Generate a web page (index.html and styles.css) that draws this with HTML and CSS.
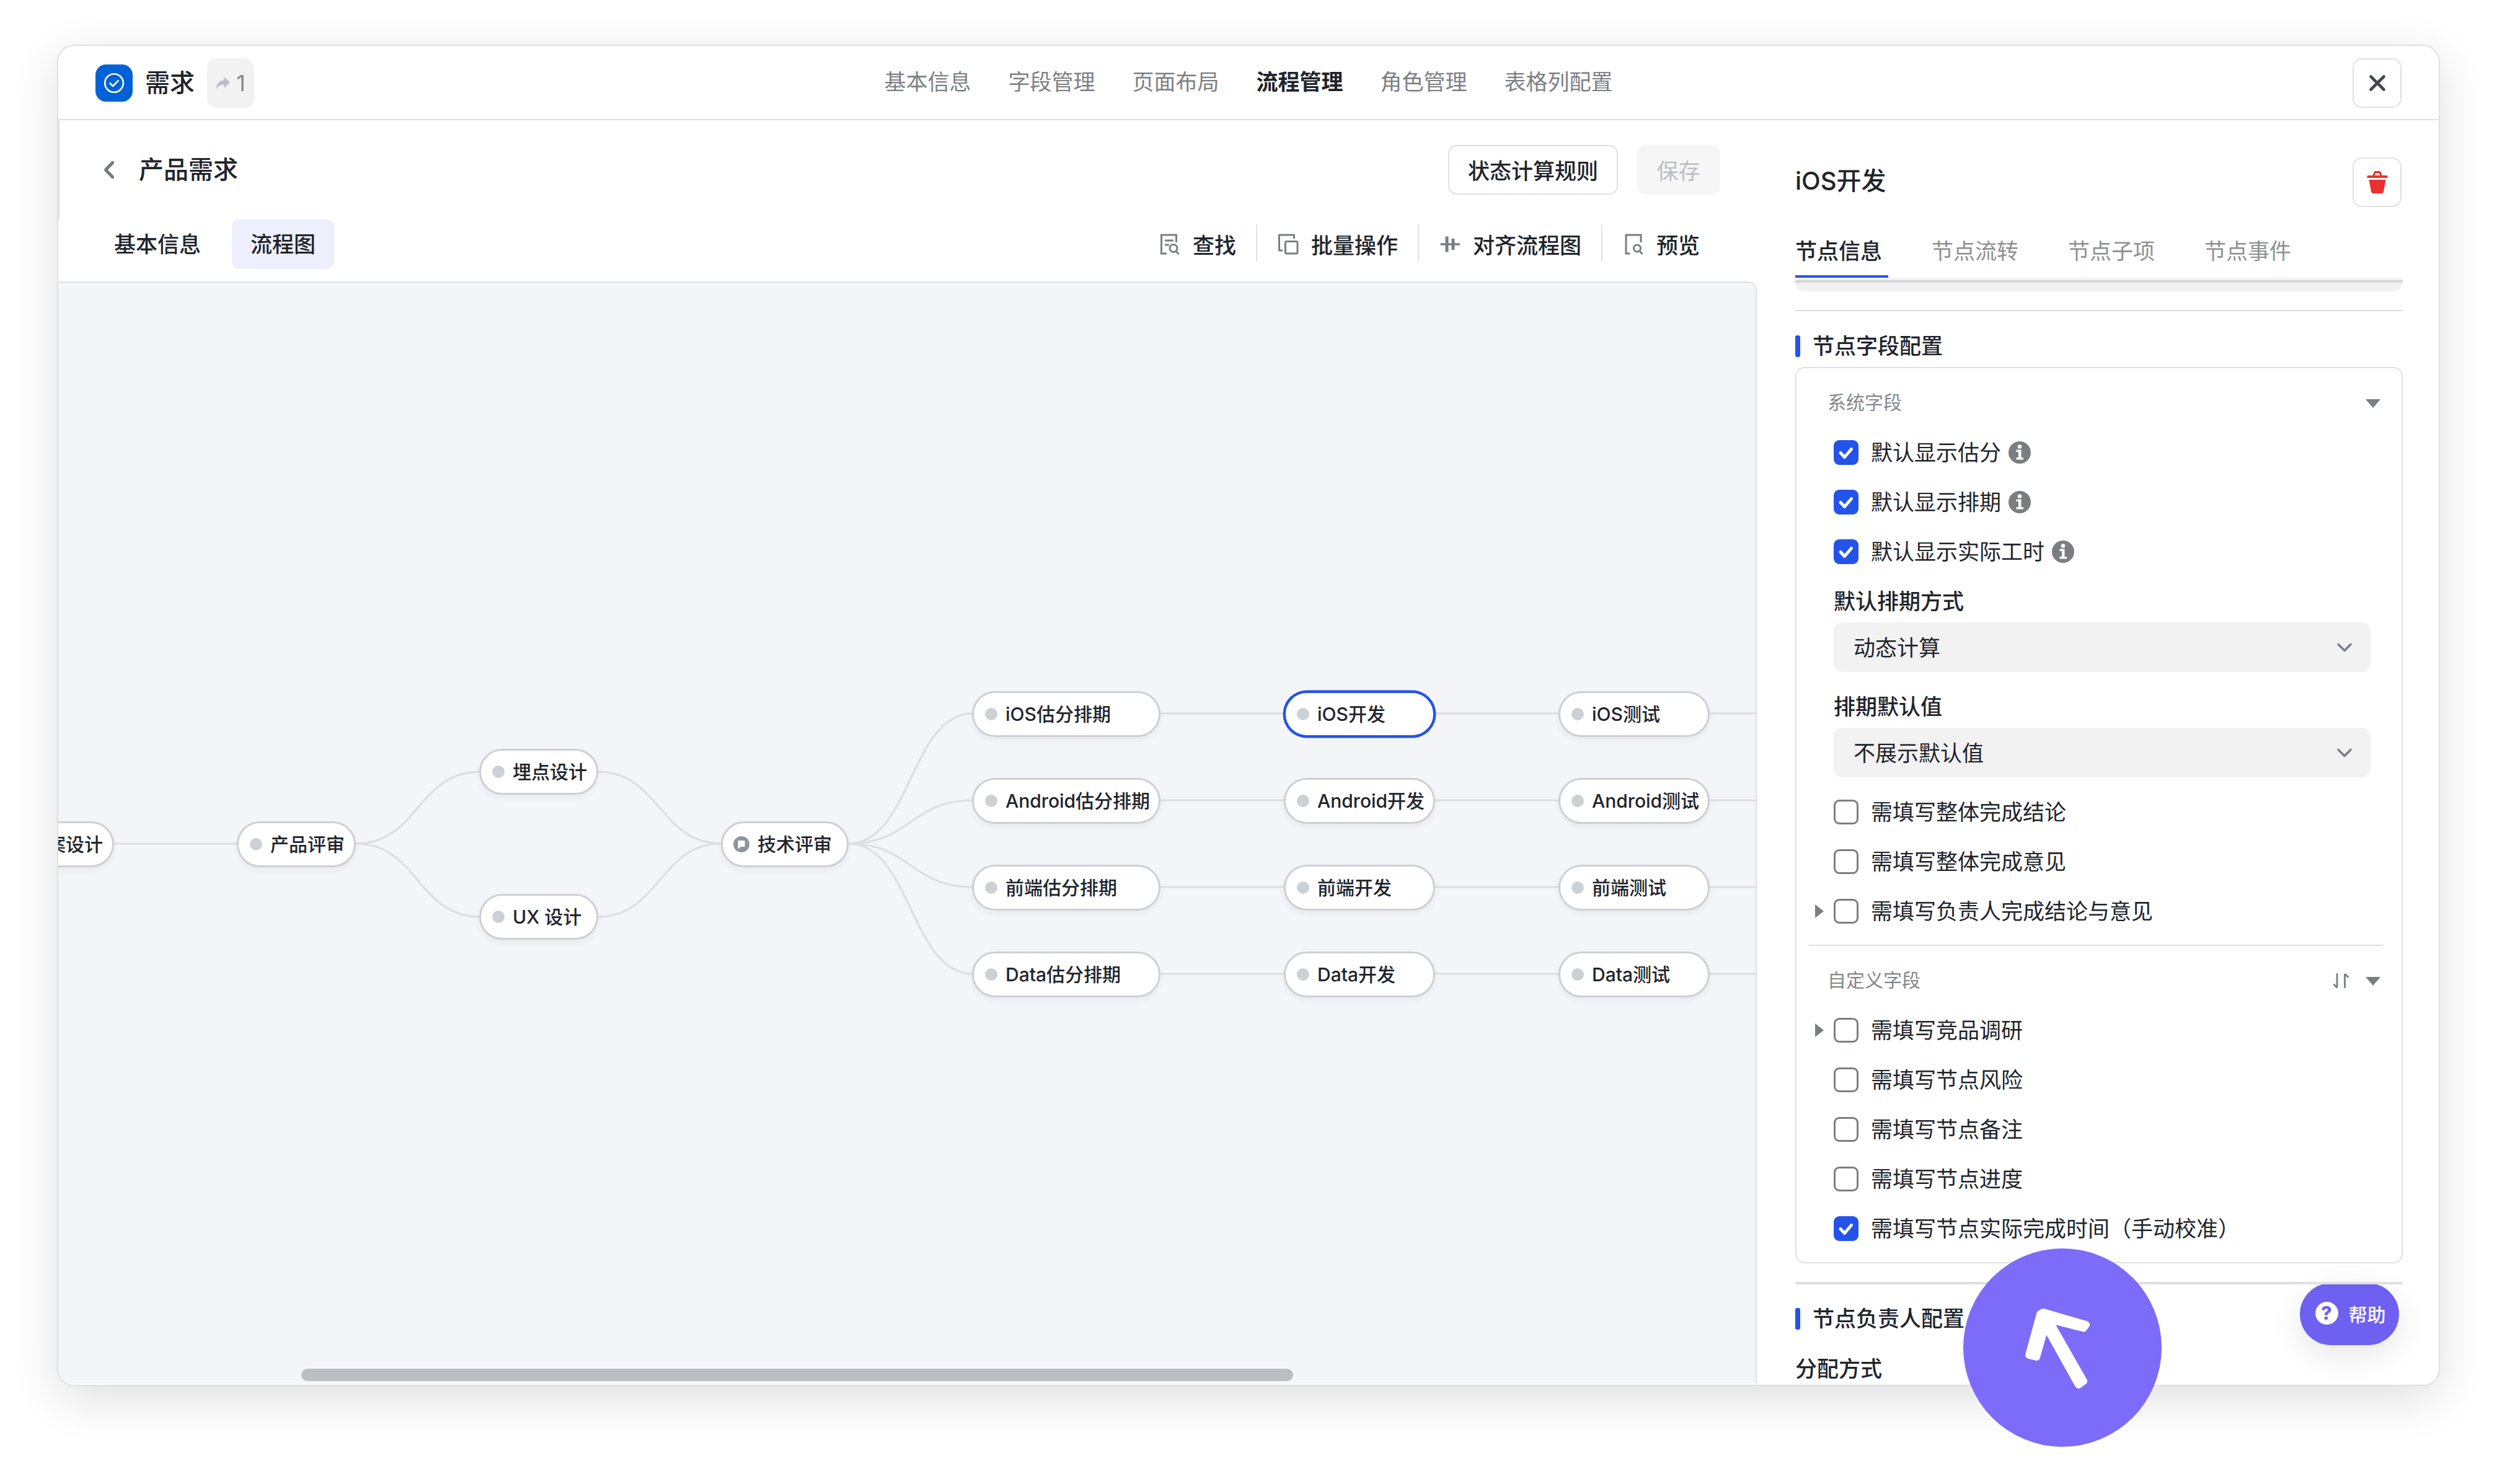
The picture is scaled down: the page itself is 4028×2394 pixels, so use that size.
FILE: index.html
```
<!DOCTYPE html>
<html lang="zh-CN">
<head>
  <meta charset="UTF-8">
  <meta name="viewport" content="width=device-width, initial-scale=1">
  <title>需求 - 流程管理</title>
  <link rel="stylesheet" href="styles.css">
</head>
<body>

  <div class="window">
    <header class="header">
      <div class="brand">
        <span class="logo">
          <svg width="36" height="36" viewBox="0 0 36 36" fill="none" stroke="#fff" stroke-width="2.6" stroke-linecap="round" stroke-linejoin="round">
            <circle cx="18" cy="18" r="14.8"/>
            <path d="M11.5 18.2l4.6 4.8 8.6-8.8"/>
          </svg>
        </span>
        <span class="brand-name">需求</span>
        <span class="badge">
          <svg width="24" height="22" viewBox="0 0 24 22" fill="#bbbfc4"><path d="M13.5 1L23 10l-9.500 9v-5.300C7.500 13.500 3.500 15.500 1 21 .8 12 5.500 6.500 13.500 6.200z"/></svg>
          1
        </span>
      </div>
      <nav class="nav">
        <a>基本信息</a>
        <a>字段管理</a>
        <a>页面布局</a>
        <a class="active">流程管理</a>
        <a>角色管理</a>
        <a>表格列配置</a>
      </nav>
      <button class="icon-btn">
        <svg width="30" height="30" viewBox="0 0 30 30" stroke="#42464e" stroke-width="4.600" stroke-linecap="round"><path d="M4.500 4.500l21 21M25.500 4.500l-21 21"/></svg>
      </button>
    </header>

    <div class="content">
      <main class="main">
        <div class="title-row">
          <svg class="back" width="20" height="32" viewBox="0 0 20 32" fill="none" stroke="#777a7e" stroke-width="5.200" stroke-linecap="round" stroke-linejoin="round"><path d="M15.500 4.500L4.500 16l11 11.500"/></svg>
          <h1>产品需求</h1>
          <button class="btn">状态计算规则</button>
          <button class="btn disabled">保存</button>
        </div>

        <div class="tool-row">
          <a class="tab">基本信息</a>
          <a class="tab active">流程图</a>
          <div class="tools">
            <span class="tool">
              <svg width="35" height="36" viewBox="0 0 35 36" fill="none" stroke="#7b7e82" stroke-width="3">
                <path d="M13 33H4.500V3h24v12M10 12h14M10 19h7"/>
                <circle cx="24" cy="24.500" r="6"/><path d="M28 29l4.500 5"/>
              </svg>
              <b>查找</b>
            </span>
            <span class="tool">
              <svg width="35" height="36" viewBox="0 0 35 36" fill="none" stroke="#7b7e82" stroke-width="3" stroke-linejoin="round">
                <path d="M9 28H3.500V3h24v6"/>
                <rect x="13.500" y="13.500" width="19.500" height="19.500" rx="2"/>
              </svg>
              <b>批量操作</b>
            </span>
            <span class="tool">
              <svg width="35" height="36" viewBox="0 0 35 36" fill="none" stroke="#7b7e82">
                <path d="M2.500 18H34" stroke-width="3.500"/>
                <path d="M13 5.500v25M23 9v18" stroke-width="5"/>
              </svg>
              <b>对齐流程图</b>
            </span>
            <span class="tool">
              <svg width="35" height="36" viewBox="0 0 35 36" fill="none" stroke="#7b7e82" stroke-width="3">
                <path d="M12.500 33H6V3h24v12"/>
                <circle cx="24" cy="24.500" r="5.500"/><path d="M28 29l4.500 5"/>
              </svg>
              <b>预览</b>
            </span>
          </div>
        </div>

        <!-- 流程画布 -->
        <div class="canvas">
          <svg class="edges" viewBox="95 456 2737 1778" fill="none" stroke="#dcdee0" stroke-width="3.200">
            <path d="M184 1361H384"/>
            <path d="M574 1361C674 1361 674 1245 774 1245M574 1361C674 1361 674 1479 774 1479"/>
            <path d="M964 1245C1064 1245 1064 1361 1164 1361M964 1479C1064 1479 1064 1361 1164 1361"/>
            <path d="M1369 1361C1469 1361 1469 1151 1569 1151M1369 1361C1469 1361 1469 1291 1569 1291M1369 1361C1469 1361 1469 1431 1569 1431M1369 1361C1469 1361 1469 1571 1569 1571"/>
            <path d="M1872 1151H2832M1872 1291H2832M1872 1431H2832M1872 1571H2832"/>
          </svg>

          <div class="node col-0 row-mid"><i class="dot"></i>方案设计</div>
          <div class="node col-1 row-mid"><i class="dot"></i>产品评审</div>
          <div class="node col-2 row-up"><i class="dot"></i>埋点设计</div>
          <div class="node col-2 row-down"><i class="dot"></i>UX 设计</div>
          <div class="node col-3 row-mid">
            <svg class="flag" width="26" height="26" viewBox="0 0 26 26"><circle cx="13" cy="13" r="13" fill="#8f959e"/><path d="M7.500 7h11v10h-8v2.500h-3z" fill="#fff"/></svg>技术评审
          </div>

          <div class="node col-4 row-1"><i class="dot"></i>iOS估分排期</div>
          <div class="node col-4 row-2"><i class="dot"></i>Android估分排期</div>
          <div class="node col-4 row-3"><i class="dot"></i>前端估分排期</div>
          <div class="node col-4 row-4"><i class="dot"></i>Data估分排期</div>

          <div class="node col-5 row-1 selected"><i class="dot"></i>iOS开发</div>
          <div class="node col-5 row-2"><i class="dot"></i>Android开发</div>
          <div class="node col-5 row-3"><i class="dot"></i>前端开发</div>
          <div class="node col-5 row-4"><i class="dot"></i>Data开发</div>

          <div class="node col-6 row-1"><i class="dot"></i>iOS测试</div>
          <div class="node col-6 row-2"><i class="dot"></i>Android测试</div>
          <div class="node col-6 row-3"><i class="dot"></i>前端测试</div>
          <div class="node col-6 row-4"><i class="dot"></i>Data测试</div>

          <div class="scrollbar"></div>
        </div>
      </main>

      <aside class="panel">
        <div class="panel-head">
          <h2>iOS开发</h2>
          <button class="icon-btn">
            <svg width="36" height="38" viewBox="0 0 36 38" fill="#eb2f2f">
              <path d="M3 8h7.500l2-5.500Q13 1 14.500 1h7q1.500 0 2 1.500L25.500 8H33q1.500 0 1.500 1.500V12h-33V9.500Q1.500 8 3 8zm11 0h8l-1-3.500h-6z" fill-rule="evenodd"/>
              <path d="M4.500 15h27l-3.500 19q-.5 3-3.500 3h-13q-3 0-3.500-3z"/>
            </svg>
          </button>
        </div>
        <div class="panel-tabs">
          <a class="active">节点信息</a>
          <a>节点流转</a>
          <a>节点子项</a>
          <a>节点事件</a>
        </div>
        <div class="strip"></div>
        <hr>
        <h3>节点字段配置</h3>

        <div class="box">
          <div class="group-head"><span>系统字段</span><i class="caret-down"></i></div>
          <div class="row"><span class="slot"></span><span class="check on"><svg viewBox="0 0 40 40"><path d="M11 20.500l6.500 7 11-13"/></svg></span>默认显示估分<span class="info"><svg viewBox="0 0 36 36"><circle cx="18" cy="8.500" r="3.300"/><path d="M12.500 13.500h8v12.500h3.500v3.500H12.500V26H16v-9h-3.500z"/></svg></span></div>
          <div class="row"><span class="slot"></span><span class="check on"><svg viewBox="0 0 40 40"><path d="M11 20.500l6.500 7 11-13"/></svg></span>默认显示排期<span class="info"><svg viewBox="0 0 36 36"><circle cx="18" cy="8.500" r="3.300"/><path d="M12.500 13.500h8v12.500h3.500v3.500H12.500V26H16v-9h-3.500z"/></svg></span></div>
          <div class="row"><span class="slot"></span><span class="check on"><svg viewBox="0 0 40 40"><path d="M11 20.500l6.500 7 11-13"/></svg></span>默认显示实际工时<span class="info"><svg viewBox="0 0 36 36"><circle cx="18" cy="8.500" r="3.300"/><path d="M12.500 13.500h8v12.500h3.500v3.500H12.500V26H16v-9h-3.500z"/></svg></span></div>

          <div class="field">
            <label>默认排期方式</label>
            <div class="select">动态计算<svg width="28" height="20" viewBox="0 0 28 20"><path d="M4 4.500l10 10 10-10"/></svg></div>
          </div>
          <div class="field">
            <label>排期默认值</label>
            <div class="select">不展示默认值<svg width="28" height="20" viewBox="0 0 28 20"><path d="M4 4.500l10 10 10-10"/></svg></div>
          </div>

          <div class="row"><span class="slot"></span><span class="check"></span>需填写整体完成结论</div>
          <div class="row"><span class="slot"></span><span class="check"></span>需填写整体完成意见</div>
          <div class="row"><span class="slot"><i class="caret-right"></i></span><span class="check"></span>需填写负责人完成结论与意见</div>

          <hr class="inner">
          <div class="group-head">
            <span>自定义字段</span>
            <svg class="sort" width="30" height="28" viewBox="0 0 30 28"><path d="M9 2v23M3.500 19.500l5.500 6M21.500 26V3M21.500 3l6 6"/></svg>
            <i class="caret-down"></i>
          </div>
          <div class="row"><span class="slot"><i class="caret-right"></i></span><span class="check"></span>需填写竞品调研</div>
          <div class="row"><span class="slot"></span><span class="check"></span>需填写节点风险</div>
          <div class="row"><span class="slot"></span><span class="check"></span>需填写节点备注</div>
          <div class="row"><span class="slot"></span><span class="check"></span>需填写节点进度</div>
          <div class="row"><span class="slot"></span><span class="check on"><svg viewBox="0 0 40 40"><path d="M11 20.500l6.500 7 11-13"/></svg></span>需填写节点实际完成时间（手动校准）</div>
        </div>

        <hr class="thick">
        <h3 class="owner">节点负责人配置</h3>
        <p class="assign">分配方式</p>

        <button class="help"><span class="question">?</span>帮助</button>
      </aside>
    </div>
  </div>

  <!-- 指示光标 -->
  <div class="pointer">
    <svg viewBox="3167 2014 320 320" fill="#fff" stroke="#fff" stroke-width="12" stroke-linejoin="round">
      <path d="M3296 2117L3365 2137 3361 2142.500 3304 2128 3361 2228 3353 2234 3299.500 2138 3285 2189 3273 2186 3291 2120z"/>
    </svg>
  </div>

</body>
</html>
```
FILE: styles.css
```
* {
  box-sizing: border-box;
}

body {
  min-height: 100vh;
  margin: 0;
  padding: 72px 0 0 92px;
  background: #fff;
  font-family: Inter, "Noto Sans CJK SC", sans-serif;
  font-size: 35px;
  line-height: 1.4;
  color: #20242b;
}

h1, h2, h3, p {
  margin: 0;
}

hr {
  border: none;
  height: 2px;
  margin: 0;
  background: #dfe0e1;
}

button {
  font-family: inherit;
  font-size: 35px;
  color: inherit;
}

svg {
  display: block;
  flex-shrink: 0;
}

.window {
  position: relative;
  z-index: 0;
  width: 3844px;
  height: 2164px;
  border: 2px solid #dfe0e0;
  border-radius: 28px;
  background: #fff;
  box-shadow: 0 20px 75px rgba(0, 0, 0, 0.13);
  overflow: hidden;
}

/* Header */
.header {
  display: grid;
  grid-template-columns: 1fr auto 1fr;
  align-items: center;
  height: 120px;
  padding: 0 60px;
  border-bottom: 2px solid #dfe0e1;
}

.brand {
  display: flex;
  align-items: center;
  padding-top: 2px;
}

.logo {
  display: flex;
  align-items: center;
  justify-content: center;
  width: 60px;
  height: 60px;
  border-radius: 17px;
  background: #0062d6;
}

.brand-name {
  margin: 0 20px;
  font-size: 40px;
  font-weight: 500;
}

.badge {
  display: flex;
  align-items: center;
  justify-content: center;
  gap: 9px;
  width: 76px;
  height: 80px;
  border-radius: 15px;
  background: #f2f2f2;
  color: #84878b;
}

.nav {
  display: flex;
  gap: 60px;
  margin-top: -2px;
  color: #7d8084;
}

.nav .active {
  color: #20242b;
  font-weight: 700;
}

.icon-btn {
  display: flex;
  align-items: center;
  justify-content: center;
  justify-self: end;
  width: 79px;
  height: 80px;
  padding: 0;
  border: 2px solid #dfe0e1;
  border-radius: 15px;
  background: #fff;
}

.header .icon-btn {
  margin-top: 2px;
}

/* Layout */
.content {
  display: flex;
  height: 2040px;
}

.main {
  display: flex;
  flex-direction: column;
  width: 2740px;
}

.title-row {
  display: flex;
  align-items: center;
  height: 160px;
  padding-right: 59px;
  padding-left: 70px;
  border-left: 2px solid #dfe0e1;
}

.title-row h1 {
  margin: 0 auto 0 38px;
  font-size: 40px;
  font-weight: 500;
}

.btn {
  width: 274px;
  height: 80px;
  margin-left: 30px;
  padding: 0 0 2px;
  border: 2px solid #dfe0e1;
  border-radius: 14px;
  background: #fff;
  font-weight: 500;
}

.btn.disabled {
  width: 135px;
  border-color: #f6f6f6;
  background: #f6f6f6;
  color: #bbbfc4;
  font-weight: 400;
}

.tool-row {
  display: flex;
  align-items: flex-start;
  gap: 20px;
  height: 100px;
  padding-right: 60px;
  padding-left: 60px;
}

.tab {
  padding: 0 30px;
  border-radius: 12px;
  line-height: 80px;
  font-weight: 500;
}

.tab.active {
  background: #edeffd;
}

.tools {
  display: flex;
  margin: 8px 0 0 auto;
}

.tool {
  display: flex;
  align-items: center;
  gap: 20px;
  height: 60px;
  padding: 0 32px;
  border-left: 2px solid #dfe0e1;
}

.tool:first-child {
  border-left: none;
}

.tool svg {
  margin-top: 3px;
}

.tool b {
  padding-top: 9px;
  font-weight: 500;
}

/* Flow canvas */
.canvas {
  position: relative;
  flex: 1;
  padding-left: 1px;
  border-top: 2px solid #dfe0e1;
  border-right: 2px solid #dfe0e1;
  border-bottom: 2px solid #fff;
  border-top-right-radius: 15px;
  background: #f4f5f8;
  overflow: hidden;
}

.edges {
  width: 2737px;
  height: 1778px;
}

.node {
  position: absolute;
  display: flex;
  align-items: center;
  height: 74px;
  padding-left: 18px;
  border: 3px solid #cdd0d3;
  border-radius: 37px;
  background: #fff;
  box-shadow: 0 5px 10px rgba(31, 35, 41, 0.05);
  font-size: 30px;
  font-weight: 500;
  white-space: nowrap;
}

.node.selected {
  border-color: #2453ea;
  box-shadow: 0 0 0 1.5px #2453ea;
}

.dot {
  width: 20px;
  height: 20px;
  margin-right: 13px;
  border-radius: 50%;
  background: #cdd1d4;
}

.flag {
  margin: 0 13px 0 -1px;
}

.col-0 { left: -102px; width: 192px; }
.col-1 { left: 288px; width: 192px; }
.col-2 { left: 679px; width: 192px; }
.col-3 { left: 1069px; width: 206px; }
.col-4 { left: 1474px; width: 304px; }
.col-5 { left: 1977px; width: 244px; }
.col-6 { left: 2420px; width: 244px; }

.row-up { top: 752px; }
.row-mid { top: 869px; }
.row-down { top: 986px; }
.row-1 { top: 659px; }
.row-2 { top: 799px; }
.row-3 { top: 939px; }
.row-4 { top: 1079px; }

.scrollbar {
  position: absolute;
  left: 392px;
  bottom: 4px;
  width: 1600px;
  height: 20px;
  border-radius: 10px;
  background: #bbbec3;
}

/* Right panel */
.panel {
  position: relative;
  flex: 1;
  padding: 60px 58px 0 62px;
}

.panel-head {
  display: flex;
  align-items: center;
  justify-content: space-between;
  padding-right: 2px;
}

.panel-head h2 {
  margin-top: -4px;
  font-size: 40px;
  font-weight: 500;
}

.panel-tabs {
  display: flex;
  gap: 70px;
  margin-top: 29px;
  line-height: 85px;
  color: #8d8f93;
}

.panel-tabs a {
  padding-right: 10px;
}

.panel-tabs .active {
  color: #20242b;
  font-weight: 500;
  box-shadow: inset 0 -4px #2453ea;
}

.strip {
  height: 22px;
  margin-bottom: 30px;
  padding-top: 4px;
  border-radius: 0 0 14px 14px;
  background: #f2f2f2;
}

.strip::before {
  content: "";
  display: block;
  height: 4px;
  background: #d6d6d6;
}

.panel h3 {
  display: flex;
  align-items: center;
  gap: 20px;
  height: 36px;
  margin: 38px 0 16px;
  font-size: 35px;
  font-weight: 500;
}

.panel h3::before {
  content: "";
  width: 8px;
  height: 35px;
  border-radius: 3px;
  background: #2453ea;
}

.box {
  height: 1446px;
  padding-top: 26px;
  border: 2px solid #dfe0e1;
  border-radius: 15px;
}

.group-head {
  display: flex;
  align-items: center;
  gap: 25px;
  height: 60px;
  margin-bottom: 10px;
  padding: 0 34px 0 50px;
  font-size: 30px;
  color: #84878b;
}

.group-head span {
  margin-top: -2px;
  margin-right: auto;
}

.sort {
  fill: none;
  stroke: #7b7e82;
  stroke-width: 2.8;
}

.caret-down {
  width: 24px;
  height: 14px;
  margin-top: 2px;
  background: #7b7e81;
  clip-path: polygon(0 0, 100% 0, 50% 100%);
}

.caret-right {
  width: 14px;
  height: 22px;
  background: #7b7e81;
  clip-path: polygon(0 0, 100% 50%, 0 100%);
}

.row {
  display: flex;
  align-items: center;
  height: 80px;
  padding-left: 30px;
}

.slot {
  display: flex;
  width: 30px;
}

.check {
  width: 40px;
  height: 40px;
  margin-right: 20px;
  border: 3px solid #7b7e82;
  border-radius: 9px;
}

.check.on {
  border: none;
  background: #2453ea;
}

.check path {
  fill: none;
  stroke: #fff;
  stroke-width: 5;
  stroke-linecap: round;
  stroke-linejoin: round;
}

.info {
  width: 36px;
  height: 36px;
  margin-left: 12px;
  border-radius: 50%;
  background: #7b7e81;
}

.info svg {
  fill: #fff;
}

.field {
  margin: 6px 50px 0 60px;
}

.field + .field {
  margin-top: 22px;
  margin-bottom: 16px;
}

.field label {
  display: block;
  line-height: 68px;
  font-weight: 500;
}

.select {
  display: flex;
  align-items: center;
  justify-content: space-between;
  height: 80px;
  padding: 2px 28px 0 32px;
  border-radius: 14px;
  background: #f2f2f2;
}

.select path {
  fill: none;
  stroke: #7b7e82;
  stroke-width: 3.6;
  stroke-linecap: round;
  stroke-linejoin: round;
}

.inner {
  margin: 14px 30px 26px 20px;
}

.thick {
  position: relative;
  z-index: 2;
  height: 4px;
  margin-top: 30px;
}

.panel .owner {
  margin: 37px 0 39px;
}

.assign {
  line-height: 48px;
  font-weight: 500;
}

/* Floating help button */
.help {
  position: absolute;
  right: 64px;
  bottom: 64px;
  display: flex;
  align-items: center;
  justify-content: center;
  gap: 17px;
  width: 160px;
  height: 100px;
  padding: 0 0 3px 3px;
  border: none;
  border-radius: 50px;
  background: #6e60f0;
  box-shadow: 0 15px 50px rgba(0, 0, 0, 0.1);
  color: #fff;
  font-size: 30px;
  font-weight: 500;
}

.question {
  width: 37px;
  height: 37px;
  border-radius: 50%;
  background: #fff;
  color: #6e60f0;
  line-height: 37px;
  font-weight: 800;
}

.pointer {
  position: absolute;
  left: 3167px;
  top: 2014px;
  width: 320px;
  height: 320px;
  border-radius: 50%;
  background: #7c6cf9;
}
```
